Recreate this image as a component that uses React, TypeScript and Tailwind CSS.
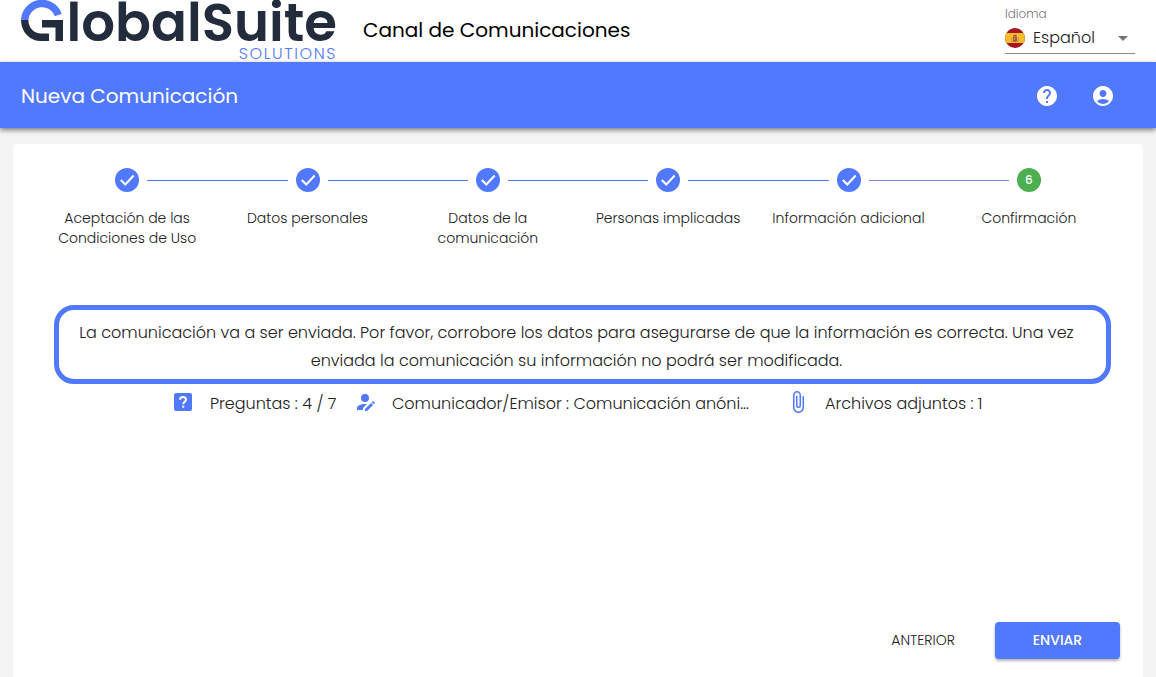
import React from "react";
import { MdAccountCircle, MdArrowDropDown, MdAttachFile, MdHelp } from "react-icons/md";

const steps = [
  "Aceptación de las Condiciones de Uso",
  "Datos personales",
  "Datos de la comunicación",
  "Personas implicadas",
  "Información adicional",
  "Confirmación",
];

function Logo() {
  return (
    <a href="#" aria-label="GlobalSuite Solutions" className="flex w-[316px] shrink-0 flex-col">
      <span className="flex h-[46px] items-start justify-between">
        <svg viewBox="0 0 42 42" className="h-[42px] w-[42px] shrink-0" aria-hidden="true">
          <path d="M3.700 21A17.300 17.300 0 0 1 37.300 16" fill="none" stroke="#5179fd" strokeWidth="7.400" />
          <path d="M3.700 21C3.700 31 11 38.300 20 38.300H28" fill="none" stroke="#222c3c" strokeWidth="7.400" />
          <path d="M21 21H42V42H34.500V28.500H21Z" fill="#222c3c" />
        </svg>
        <span className="text-[53px] leading-[48px] font-semibold text-[#222c3c]">lobalSuite</span>
      </span>
      <span className="self-end text-base leading-[18px] tracking-widest text-[#5179fd]">SOLUTIONS</span>
    </a>
  );
}

function SpainFlag() {
  return (
    <svg viewBox="0 0 20 20" className="h-5 w-5 shrink-0" aria-hidden="true">
      <clipPath id="round"><circle cx="10" cy="10" r="10" /></clipPath>
      <g clipPath="url(#round)">
        <path d="M0 0h20v20H0z" fill="#a9151f" />
        <path d="M0 5h20v10H0z" fill="#f3bd2e" />
        <path d="M8 9h4v3.500a2 1.500 0 0 1-4 0z" fill="#b5533c" />
        <path d="M6.800 9.500v4.500M13.200 9.500v4.500" stroke="#c08a3a" />
        <path d="M8 8h4M9 7.300h2" stroke="#a33a2c" />
        <path d="M9 10.500h1v1H9z" fill="#e9d3b0" />
        <path d="M10.500 11.500h1v1h-1z" fill="#6f5a6b" />
      </g>
    </svg>
  );
}

function CheckMark() {
  return (
    <svg viewBox="0 0 24 24" className="h-6 w-6" aria-hidden="true">
      <path d="M5.800 12L10.300 16.500L18.700 7.500" fill="none" stroke="currentColor" strokeWidth="2" />
    </svg>
  );
}

function Stepper() {
  return (
    <ol className="grid grid-cols-6">
      {steps.map((label, i) => {
        const last = i === steps.length - 1;
        return (
          <li key={label} className="flex flex-col items-center">
            <div className="flex w-full items-center gap-2">
              <span className={i === 0 ? "h-px flex-1" : i === 5 ? "h-px flex-1 bg-[#7986cb]" : "h-px flex-1 bg-[#5179fd]"} />
              <span className={last
                ? "flex h-6 w-6 items-center justify-center rounded-full bg-[#4caf50] text-xs font-medium text-white"
                : "flex h-6 w-6 items-center justify-center rounded-full bg-[#5179fd] text-white"}>
                {last ? 6 : <CheckMark />}
              </span>
              <span className={last ? "h-px flex-1" : i === 4 ? "h-px flex-1 bg-[#7986cb]" : "h-px flex-1 bg-[#5179fd]"} />
            </div>
            <p className="mt-4 max-w-40 text-center text-sm leading-5">{label}</p>
          </li>
        );
      })}
    </ol>
  );
}

export default function App() {
  return (
    <div className="flex min-h-screen flex-col bg-[#f4f4f4] font-['Poppins','Inter',sans-serif] font-light text-[#212121]">
      <header className="flex h-[62px] items-center justify-between bg-white px-[21px]">
        <div className="flex items-center gap-[26px]">
          <Logo />
          <h1 className="pb-0.5 text-xl font-normal text-black">Canal de Comunicaciones</h1>
        </div>
        <div className="flex w-[130px] flex-col pb-0.5">
          <label htmlFor="language" className="text-xs leading-4 text-[#757575]">Idioma</label>
          <div className="relative flex h-8 items-center gap-2 border-b border-[#8a8a8a]">
            <SpainFlag />
            <select id="language" className="w-full appearance-none bg-transparent text-base outline-none">
              <option>Español</option>
            </select>
            <MdArrowDropDown className="pointer-events-none absolute right-0 h-6 w-6 text-[#757575]" />
          </div>
        </div>
      </header>

      <div className="relative flex h-[66px] items-center justify-between bg-[#5179fd] pt-0.5 pr-[41px] pl-[21px] text-white shadow-[0_2px_5px_rgba(0,0,0,0.5)]">
        <h2 className="text-xl font-normal">Nueva Comunicación</h2>
        <div className="flex gap-8">
          <button aria-label="Ayuda"><MdHelp className="h-6 w-6" /></button>
          <button aria-label="Cuenta"><MdAccountCircle className="h-6 w-6" /></button>
        </div>
      </div>

      <main className="mx-[13px] mt-4 flex flex-1 flex-col rounded-t bg-white p-6 pb-[18px]">
        <Stepper />

        <section className="mt-[57px] mr-2 ml-[17px]">
          <p className="rounded-[20px] border-5 border-[#5179fd] pt-[9px] pr-6 pb-1 pl-3 text-center text-base leading-7">
            La comunicación va a ser enviada. Por favor, corrobore los datos para asegurarse de que la información es
            correcta. Una vez enviada la comunicación su información no podrá ser modificada.
          </p>
          <ul className="mt-1.5 flex h-7 items-center pl-[117px] text-base">
            <li className="flex w-[182px] items-center gap-[15px]">
              <svg viewBox="0 0 24 24" className="mb-1 h-6 w-6 shrink-0" aria-hidden="true">
                <rect x="3" y="3" width="18" height="18" rx="2" fill="#5179fd" />
                <path d="M9 9.800A3 2.700 0 0 1 15 9.800C15 11.800 12.200 11.800 12.200 14.200" fill="none" stroke="#fff" strokeWidth="2" />
                <path d="M11.200 15.700h2v2h-2z" fill="#fff" />
              </svg>
              <span className="whitespace-nowrap">Preguntas : 4 / 7</span>
            </li>
            <li className="flex w-[433px] items-center gap-[15px]">
              <svg viewBox="0 0 24 24" className="mb-1 h-6 w-6 shrink-0 text-[#5179fd]" fill="currentColor" aria-hidden="true">
                <path d="M21.7 13.350L20.700 14.350L18.650 12.300L19.650 11.300C19.860 11.090 20.210 11.090 20.420 11.300L21.700 12.580C21.910 12.790 21.910 13.140 21.700 13.350M12 18.940L18.060 12.880L20.110 14.930L14.060 21H12V18.940M12 14C7.580 14 4 15.790 4 18V20H10V18.110L14 14.110C13.340 14.030 12.670 14 12 14M12 4A4 4 0 0 0 8 8A4 4 0 0 0 12 12A4 4 0 0 0 16 8A4 4 0 0 0 12 4Z" />
              </svg>
              <span className="whitespace-nowrap">Comunicador/Emisor : Comunicación anóni...</span>
            </li>
            <li className="flex items-center gap-[15px]">
              <MdAttachFile className="mb-1 h-6 w-6 shrink-0 text-[#5179fd]" />
              <span className="whitespace-nowrap">Archivos adjuntos : 1</span>
            </li>
          </ul>
        </section>

        <div className="-mr-px mt-auto flex justify-end gap-2">
          <button className="h-[37px] px-8 pb-0.5 text-sm font-light">ANTERIOR</button>
          <button className="h-[37px] w-[125px] rounded bg-[#5179fd] pb-0.5 text-sm font-medium text-white shadow-[0_2px_3px_rgba(0,0,0,0.3)]">ENVIAR</button>
        </div>
      </main>
    </div>
  );
}
